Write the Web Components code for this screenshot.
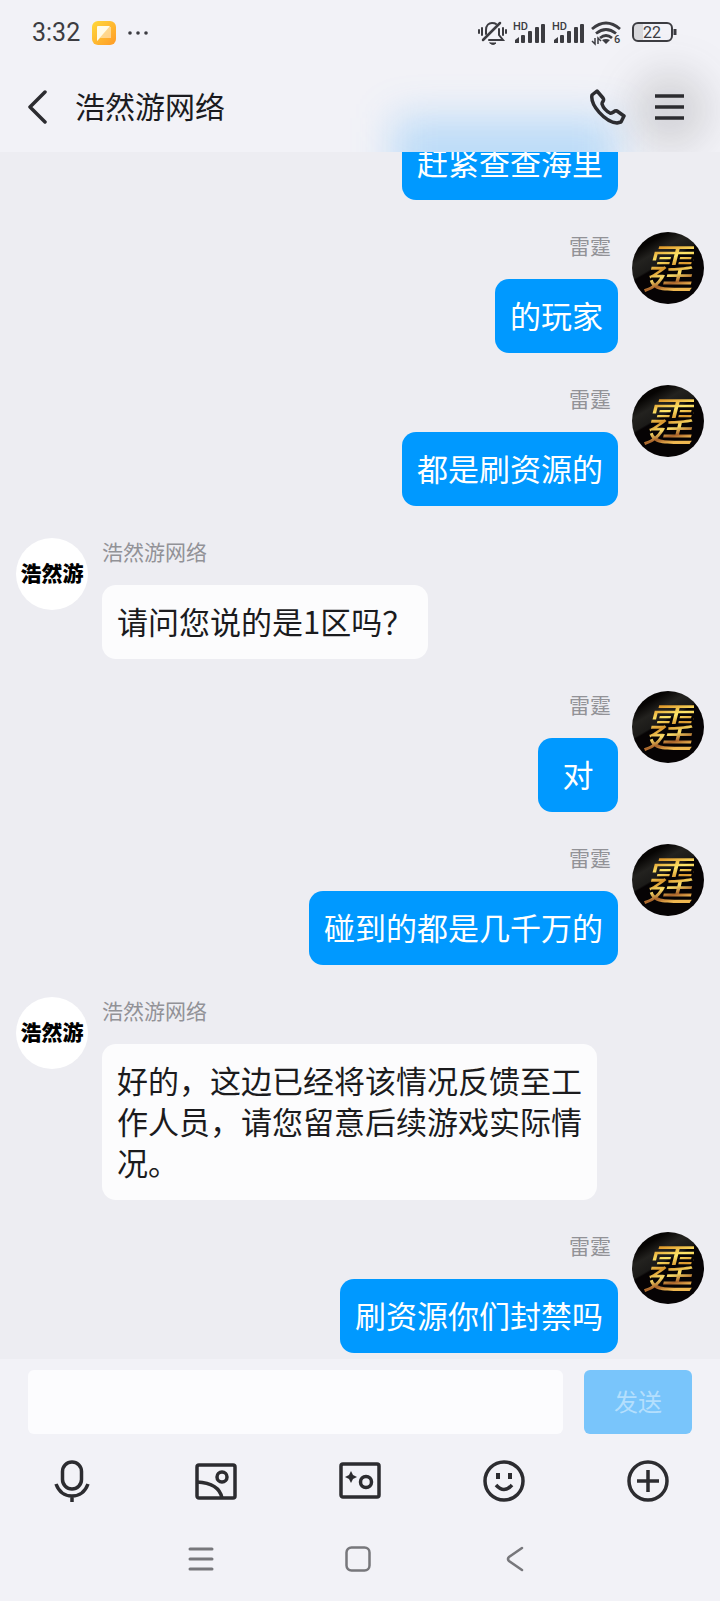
<!DOCTYPE html>
<html lang="zh-CN">
<head>
<meta charset="utf-8">
<meta name="viewport" content="width=device-width, initial-scale=1">
<title>浩然游网络</title>
<style>
  html, body {
    margin: 0;
    height: 100%;
  }
  body {
    font-family: "Noto Sans CJK SC", sans-serif;
    --bar: #f2f2f7;
    --ink: #2c2c30;
    --blue: #0099ff;
  }
</style>
</head>
<body>
<chat-app>
  <chat-header slot="header" heading="浩然游网络"></chat-header>
  <chat-message side="out" continued>赶紧查查海里</chat-message>
  <chat-message side="out" name="雷霆">的玩家</chat-message>
  <chat-message side="out" name="雷霆">都是刷资源的</chat-message>
  <chat-message side="in" name="浩然游网络">请问您说的是1区吗？</chat-message>
  <chat-message side="out" name="雷霆">对</chat-message>
  <chat-message side="out" name="雷霆">碰到的都是几千万的</chat-message>
  <chat-message side="in" name="浩然游网络">好的，这边已经将该情况反馈至工作人员，请您留意后续游戏实际情况。</chat-message>
  <chat-message side="out" name="雷霆">刷资源你们封禁吗</chat-message>
  <chat-composer slot="footer"></chat-composer>
  <system-nav slot="footer"></system-nav>
</chat-app>

<script>
const RESET = `
  * { box-sizing: border-box; }
  svg { display: block; fill: none; stroke: currentColor; }
  svg.solid { fill: currentColor; stroke: none; }
  button {
    display: flex;
    align-items: center;
    justify-content: center;
    margin: 0;
    padding: 0;
    border: none;
    background: none;
    color: inherit;
    font: inherit;
    cursor: pointer;
  }
`;

class ChatApp extends HTMLElement {
	constructor() {
		super();
		this.attachShadow({ mode: "open" }).innerHTML = `
      <style>
      ${RESET}
      :host {
        display: flex;
        flex-direction: column;
        height: 100vh;
        background: #ededf2;
      }
      main {
        flex: 1;
        min-height: 0;
        display: flex;
        flex-direction: column;
        justify-content: flex-end;
        gap: 32px;
        padding: 0 16px 6px;
        overflow: hidden;
      }
      footer {
        background: var(--bar);
        padding: 11px 0;
      }
      </style>
      <slot name="header"></slot>
      <main><slot></slot></main>
      <footer><slot name="footer"></slot></footer>
    `;
	}
}

class StatusBar extends HTMLElement {
	constructor() {
		super();
		const signal = `
      <svg class="solid" width="33" height="24" viewBox="0 0 33 24">
        <text x="0" y="9" font-size="11" font-weight="500">HD</text>
        <path d="M2 22v-3l4-3v6z"/>
        <rect x="8" y="14" width="4" height="8" rx="1"/>
        <rect x="15" y="10" width="4" height="12" rx="1"/>
        <rect x="22" y="6" width="4" height="16" rx="1"/>
        <rect x="28" y="3" width="4" height="19" rx="1"/>
      </svg>`;
		this.attachShadow({ mode: "open" }).innerHTML = `
      <style>
      ${RESET}
      :host {
        display: flex;
        align-items: center;
        justify-content: space-between;
        height: 62px;
        padding: 4px 43px 0 32px;
        color: #3c3c41;
        font-family: Roboto, "Noto Sans CJK SC", sans-serif;
      }
      div { display: flex; align-items: center; }
      .left { gap: 12px; }
      .right { gap: 6px; }
      time { font-size: 25px; line-height: 30px; }
      </style>
      <div class="left">
        <time>3:32</time>
        <svg class="solid" width="24" height="24" viewBox="0 0 24 24">
          <defs><linearGradient id="note" x1="0" y1="0" x2="1" y2="1">
            <stop offset="0" stop-color="#ffd93a"/><stop offset="1" stop-color="#ff9a26"/>
          </linearGradient></defs>
          <rect width="24" height="24" rx="6" fill="url(#note)"/>
          <path d="M5 6h14v11H8l-3 3z" fill="#fff" opacity=".45"/>
          <path d="M5 6q0-1 1-1h12L5 20z" fill="#fffbe8"/>
        </svg>
        <svg class="solid" width="20" height="4" viewBox="0 0 20 4">
          <circle cx="2" cy="2" r="1.8"/><circle cx="10" cy="2" r="1.8"/><circle cx="18" cy="2" r="1.8"/>
        </svg>
      </div>
      <div class="right">
        <svg width="29" height="24" viewBox="0 0 29 24" stroke-width="2" stroke-linecap="round">
          <path d="M1 9v3M4 7v7M28 9v3M25 7v7"/>
          <path d="M8 13V9c0-5 3-7 6-7 2 0 3 0 4 1M21 8v6l4 5H11"/>
          <path d="M22 2 5 19" stroke-width="2.5"/>
          <path d="M12 22h6q-3 3-6 0z" fill="currentColor" stroke-width="1"/>
        </svg>
        ${signal}
        ${signal}
        <svg width="34" height="28" viewBox="0 -2 34 28" stroke-width="2.8">
          <path d="M1 8q14-12 28 0M5 12.5q10-8 20 0M9 17q6-5 12 0"/>
          <path d="m11 19q4-2 8 0l-4 4z" fill="currentColor" stroke="none"/>
          <path d="M4 17v6l-3-3M7 23v-6l3 3" stroke-width="1.5"/>
          <text x="23" y="22" font-size="11" font-weight="500" fill="currentColor" stroke="none">6</text>
        </svg>
        <svg width="46" height="24" viewBox="0 0 46 24" stroke-width="2">
          <path d="M6 3h6v16H6q-3 0-3-3V6q0-3 3-3z" fill="#d8d8dc" stroke="none"/>
          <rect x="2" y="2" width="39" height="18" rx="5"/>
          <path d="M44 8v6" stroke-width="3"/>
          <text x="21" y="17" font-size="16" text-anchor="middle" fill="currentColor" stroke="none">22</text>
        </svg>
      </div>
    `;
	}
}

class ChatHeader extends HTMLElement {
	constructor() {
		super();
		this.attachShadow({ mode: "open" }).innerHTML = `
      <style>
      ${RESET}
      /* frosted bar: soft traces of the bubble and avatar scrolled beneath it */
      :host {
        display: block;
        flex: none;
        position: relative;
        overflow: hidden;
        background: var(--bar);
      }
      .trace {
        position: absolute;
        filter: blur(20px);
      }
      .trace.bubble {
        right: 104px;
        bottom: -36px;
        width: 222px;
        height: 70px;
        background: rgba(40, 160, 250, .27);
      }
      .trace.avatar {
        right: 12px;
        bottom: 4px;
        width: 76px;
        height: 76px;
        border-radius: 50%;
        background: rgba(60, 60, 60, .17);
      }
      status-bar, header { position: relative; }
      header {
        display: flex;
        align-items: center;
        height: 90px;
        padding: 0 26px 0 18px;
        color: var(--ink);
      }
      h1 {
        flex: 1;
        margin: 0 0 4px 17px;
        font-size: 30px;
        line-height: 40px;
        font-weight: 400;
        color: #1b1b1f;
      }
      button { height: 48px; }
      .back { width: 40px; }
      .call { width: 48px; margin-right: 14px; }
      .menu { width: 48px; }
      </style>
      <div class="trace bubble"></div>
      <div class="trace avatar"></div>
      <status-bar></status-bar>
      <header>
        <button class="back" aria-label="返回">
          <svg width="22" height="34" viewBox="0 0 22 34" stroke-width="3.5" stroke-linecap="round" stroke-linejoin="round"><path d="M18 2 3 17l15 15"/></svg>
        </button>
        <h1>${this.getAttribute("heading")}</h1>
        <button class="call" aria-label="语音通话">
          <svg width="36" height="36" viewBox="0 0 36 36" stroke-width="3.5" stroke-linejoin="round">
            <path d="M7 2 2 6C0 16 15 33 27 34l4-1 3-6-7-5c-3-1-4 3-7 2-4-2-7-6-8-9 0-3 3-3 1-6z"/>
          </svg>
        </button>
        <button class="menu" aria-label="菜单">
          <svg width="30" height="26" viewBox="0 0 30 26" stroke-width="3.5"><path d="M0 2h29M0 13h29M0 24h29"/></svg>
        </button>
      </header>
    `;
	}
}

class UserAvatar extends HTMLElement {
	constructor() {
		super();
		this.attachShadow({ mode: "open" }).innerHTML = `
      <style>
      :host {
        display: flex;
        flex: none;
        align-items: center;
        justify-content: center;
        width: 72px;
        height: 72px;
        border-radius: 50%;
        white-space: nowrap;
      }
      :host([kind="in"]) {
        background: #fff;
        color: #000;
        font-size: 21px;
        font-weight: 900;
        line-height: 30px;
      }
      :host([kind="out"]) {
        background: linear-gradient(150deg, #060403 18%, #23221f 30%, #1b1a18 42%, #060304 44%);
        font-size: 52px;
        font-style: italic;
        line-height: 68px;
      }
      span { margin-bottom: 4px; }
      :host([kind="out"]) span {
        background: linear-gradient(165deg, #e09a2c 25%, #ffe86a 40%, #d8942c 52%, #f9dd68 62%, #a8622a 72%, #efb750 80%);
        -webkit-background-clip: text;
        background-clip: text;
        color: transparent;
      }
      </style>
      <span>${this.getAttribute("kind") === "in" ? "浩然游" : "霆"}</span>
    `;
	}
}

class ChatMessage extends HTMLElement {
	constructor() {
		super();
		const side = this.getAttribute("side");
		const name = this.getAttribute("name");
		this.attachShadow({ mode: "open" }).innerHTML = `
      <style>
      ${RESET}
      :host {
        display: flex;
        flex: none;
        align-items: flex-start;
        gap: 14px;
        padding-right: 104px;
      }
      :host([side="out"]) {
        flex-direction: row-reverse;
        padding: 0 0 0 104px;
      }
      :host([continued]) { margin-right: 86px; }
      .body {
        display: flex;
        flex-direction: column;
        align-items: flex-start;
        min-width: 0;
      }
      .name {
        margin-bottom: 20px;
        font-size: 21px;
        line-height: 27px;
        color: #929297;
      }
      .bubble {
        min-width: 80px;
        margin: 0;
        padding: 15px 15px 18px;
        border-radius: 14px;
        background: #fcfcfd;
        color: #1b1b1d;
        font-size: 31px;
        line-height: 41px;
      }
      :host([side="in"]) .body { max-width: 495px; }
      :host([side="out"]) .body { align-items: flex-end; }
      :host([side="out"]) .name { padding-right: 7px; }
      :host([side="out"]) .bubble {
        background: var(--blue);
        color: #fff;
        text-align: center;
      }
      </style>
      ${name ? `<user-avatar kind="${side}"></user-avatar>` : ""}
      <div class="body">
        ${name ? `<span class="name">${name}</span>` : ""}
        <p class="bubble"><slot></slot></p>
      </div>
    `;
	}
}

class ChatComposer extends HTMLElement {
	constructor() {
		super();
		this.attachShadow({ mode: "open" }).innerHTML = `
      <style>
      ${RESET}
      :host { display: block; color: var(--ink); }
      form {
        display: flex;
        gap: 21px;
        padding: 0 28px;
      }
      input {
        flex: 1;
        min-width: 0;
        height: 64px;
        padding: 0 16px;
        border: none;
        border-radius: 6px;
        outline: none;
        background: #fcfcfe;
        font: inherit;
        font-size: 31px;
      }
      .send {
        width: 108px;
        height: 64px;
        padding-bottom: 4px;
        border-radius: 6px;
        background: #79c5fb;
        color: #b4dffd;
        font-size: 24px;
      }
      .tools {
        display: grid;
        grid-template-columns: repeat(5, 1fr);
        height: 94px;
      }
      </style>
      <form>
        <input type="text" aria-label="消息">
        <button class="send" type="button">发送</button>
      </form>
      <div class="tools">
        <button aria-label="语音">
          <svg width="42" height="42" viewBox="0 0 42 42" stroke-width="3.5">
            <rect x="11.500" y="2" width="19" height="27" rx="9.500"/>
            <path d="M5 24c3 8 9 12 16 12s13-4 16-12M21 36v6"/>
          </svg>
        </button>
        <button aria-label="图片">
          <svg width="42" height="42" viewBox="0 0 42 42" stroke-width="3.5" stroke-linejoin="round">
            <rect x="2" y="5" width="38" height="33" rx="2"/>
            <circle cx="27" cy="17" r="5"/>
            <path d="M2 22q22 1 25 16"/>
          </svg>
        </button>
        <button aria-label="拍摄">
          <svg width="42" height="42" viewBox="0 0 42 42" stroke-width="3.5" stroke-linejoin="round">
            <rect x="2" y="4" width="38" height="33" rx="2"/>
            <circle cx="27" cy="22" r="5.5"/>
            <path d="m12 11 2 4 4 2-4 2-2 4-2-4-4-2 4-2z" fill="currentColor" stroke="none"/>
          </svg>
        </button>
        <button aria-label="表情">
          <svg width="42" height="42" viewBox="0 0 42 42" stroke-width="3.5">
            <circle cx="21" cy="21" r="19"/>
            <path d="M15 13v6M27 13v6" stroke-width="4"/>
            <path d="M13 25q8 9 16 0"/>
          </svg>
        </button>
        <button aria-label="更多">
          <svg width="42" height="42" viewBox="0 0 42 42" stroke-width="3.5">
            <circle cx="21" cy="21" r="19"/>
            <path d="M10 21h22M21 10v22"/>
          </svg>
        </button>
      </div>
    `;
	}
}

class SystemNav extends HTMLElement {
	constructor() {
		super();
		this.attachShadow({ mode: "open" }).innerHTML = `
      <style>
      ${RESET}
      :host {
        display: grid;
        grid-template-columns: repeat(3, 1fr);
        height: 62px;
        padding: 0 126px 0 122px;
        color: #77777b;
      }
      </style>
      <button aria-label="最近任务">
        <svg width="26" height="26" viewBox="0 0 26 26" stroke-width="3" stroke-linecap="round"><path d="M2 3h22M2 13h22M2 23h22"/></svg>
      </button>
      <button aria-label="主屏幕">
        <svg width="26" height="26" viewBox="0 0 26 26" stroke-width="2.5"><rect x="1.5" y="1.5" width="23" height="23" rx="5"/></svg>
      </button>
      <button aria-label="返回">
        <svg width="18" height="26" viewBox="0 0 18 26" stroke-width="2.5" stroke-linecap="round"><path d="M16 2 3 11q-2 2 0 4l13 9"/></svg>
      </button>
    `;
	}
}

customElements.define("chat-app", ChatApp);
customElements.define("status-bar", StatusBar);
customElements.define("chat-header", ChatHeader);
customElements.define("user-avatar", UserAvatar);
customElements.define("chat-message", ChatMessage);
customElements.define("chat-composer", ChatComposer);
customElements.define("system-nav", SystemNav);
</script>
</body>
</html>
